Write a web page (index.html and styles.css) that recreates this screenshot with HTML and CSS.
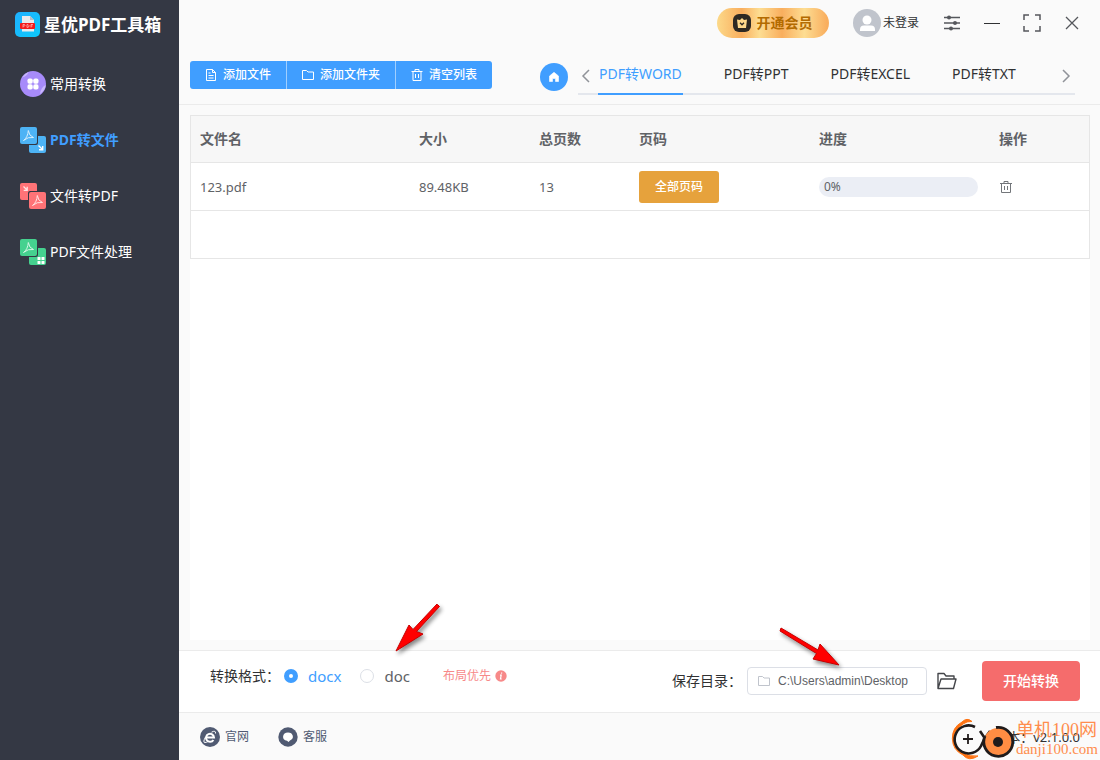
FILE: index.html
```html
<!DOCTYPE html>
<html lang="zh-CN">
<head>
<meta charset="utf-8">
<title>星优PDF工具箱</title>
<link rel="stylesheet" href="styles.css">
</head>
<body>
<div class="app">
  <aside class="sidebar">
    <h1 class="brand">
      <svg width="26" height="26" viewBox="0 0 26 26" aria-hidden="true">
        <defs><linearGradient id="brandBg" x1="0" y1="0" x2="1" y2="1"><stop offset="0" stop-color="#1fb0ff"/><stop offset="1" stop-color="#0cc9fb"/></linearGradient></defs>
        <rect x="0" y="0" width="25" height="25" rx="5" fill="url(#brandBg)"/>
        <path d="M7 4h8l4 4v11.500h-12z" fill="#e9eaec"/>
        <path d="M15 4l4 4h-4z" fill="#b9bcc2"/>
        <rect x="5" y="11" width="15" height="6" rx="1" fill="#f31c1c"/>
        <path d="M8 15.500v-3h1.500q1 .8 0 1.600h-1.500M12 12.500v3q2.500 0 2-2q-.5-1-2-1M16 15.500v-3h2M16 14h1.500" fill="none" stroke="#ffc9c9" stroke-width=".7"/>
      </svg>
      <span>星优PDF工具箱</span>
    </h1>
    <nav class="menu">
      <a class="menu-item" href="#common">
        <svg width="26" height="26" viewBox="0 0 26 26" aria-hidden="true">
          <circle cx="13" cy="13" r="13" fill="#a78bfa"/>
          <path d="M2 6.500A13 13 0 0 1 8.500.900Q7 5 2 6.500zM25.800 14Q21 16 20 23A13 13 0 0 0 25.800 14z" fill="#c9b8fc"/>
          <g fill="#fff"><rect x="7.500" y="7.500" width="5.200" height="5.200" rx="1.800"/><rect x="13.300" y="7.500" width="5.200" height="5.200" rx="1.800"/><rect x="7.500" y="13.300" width="5.200" height="5.200" rx="1.800"/><rect x="13.300" y="13.300" width="5.200" height="5.200" rx="1.800"/></g>
        </svg>
        <span>常用转换</span>
      </a>
      <a class="menu-item active" href="#pdf-to-file">
        <svg width="26" height="26" viewBox="0 0 26 26" aria-hidden="true">
          <rect x="9" y="9" width="17" height="17" rx="2" fill="#4db3f5"/>
          <rect x="-1" y="-1" width="19" height="19" rx="2" fill="#343844"/>
          <rect width="17" height="17" rx="2" fill="#4db3f5"/>
          <path d="M3.500 13.500Q8 10 8.300 3.500Q9 9 13.500 10.500Q8 9.500 3.500 13.500" fill="none" stroke="#d7effd" stroke-width="1"/>
          <path d="M18.500 18.500l4 4M22.700 19v3.700H19" fill="none" stroke="#fff" stroke-width="1.400"/>
        </svg>
        <span>PDF转文件</span>
      </a>
      <a class="menu-item" href="#file-to-pdf">
        <svg width="26" height="26" viewBox="0 0 26 26" aria-hidden="true">
          <rect width="17" height="17" rx="2" fill="#ff7377"/>
          <rect x="8" y="8" width="19" height="19" rx="2" fill="#343844"/>
          <rect x="9" y="9" width="17" height="17" rx="2" fill="#ff7377"/>
          <path d="M12.500 22.500Q17 19 17.300 12.500Q18 18 22.500 19.500Q17 18.500 12.500 22.500" fill="none" stroke="#ffe3e3" stroke-width="1"/>
          <path d="M3.500 3.500l3.500 3.500M7.200 3.800v3.500H3.700" fill="none" stroke="#ffe3e3" stroke-width="1.300"/>
        </svg>
        <span>文件转PDF</span>
      </a>
      <a class="menu-item" href="#pdf-process">
        <svg width="26" height="26" viewBox="0 0 26 26" aria-hidden="true">
          <rect x="9" y="9" width="17" height="17" rx="2" fill="#45d18f"/>
          <rect x="-1" y="-1" width="19" height="19" rx="2" fill="#343844"/>
          <rect width="17" height="17" rx="2" fill="#45d18f"/>
          <path d="M3.500 13.500Q8 10 8.300 3.500Q9 9 13.500 10.500Q8 9.500 3.500 13.500" fill="none" stroke="#d6f7e7" stroke-width="1"/>
          <g fill="#fff"><rect x="17.500" y="18" width="3" height="3" rx=".6"/><rect x="21.500" y="18" width="3" height="3" rx=".6"/><rect x="17.500" y="22" width="3" height="3" rx=".6"/><rect x="21.500" y="22" width="3" height="3" rx=".6"/></g>
        </svg>
        <span>PDF文件处理</span>
      </a>
    </nav>
  </aside>

  <main class="main">
    <header class="titlebar">
      <button class="vip" type="button">
        <svg width="18" height="18" viewBox="0 0 18 18" aria-hidden="true">
          <rect width="18" height="18" rx="6" fill="#2e2923"/>
          <path d="M4 5.500l3 .5L9 4l2 2 3-.500-1 8.500H5z" fill="#ffd98c"/>
          <path d="M7 8.800l2 2 2-2" fill="none" stroke="#2e2923" stroke-width="1.300"/>
        </svg>
        <span>开通会员</span>
      </button>
      <button class="account" type="button">
        <svg width="28" height="28" viewBox="0 0 28 28" aria-hidden="true">
          <circle cx="14" cy="14" r="14" fill="#c0c4cc"/>
          <circle cx="14" cy="11" r="4.500" fill="#fff"/>
          <path d="M7 22v-1.500a4 4 0 0 1 4-4h7a4 4 0 0 1 4 4V22z" fill="#fff"/>
        </svg>
        <span>未登录</span>
      </button>
      <div class="window-tools">
        <button class="tool" type="button" aria-label="设置">
          <svg width="18" height="18" viewBox="0 0 18 18" fill="none" stroke="#55575c" stroke-width="1.500"><path d="M1 3.500h16M1 9h16M1 14.500h16"/><g fill="#55575c" stroke="none"><circle cx="6" cy="3.500" r="2"/><circle cx="12" cy="9" r="2"/><circle cx="8" cy="14.500" r="2"/></g></svg>
        </button>
        <button class="tool" type="button" aria-label="最小化">
          <svg width="18" height="18" viewBox="0 0 18 18"><path d="M1 9.500h16" stroke="#303133" stroke-width="1"/></svg>
        </button>
        <button class="tool" type="button" aria-label="最大化">
          <svg width="18" height="18" viewBox="0 0 18 18" fill="none" stroke="#55575c" stroke-width="1.500"><path d="M1 6V1h5M12 1h5v5M17 12v5h-5M6 17H1v-5"/></svg>
        </button>
        <button class="tool" type="button" aria-label="关闭">
          <svg width="18" height="18" viewBox="0 0 18 18" fill="none" stroke="#55575c" stroke-width="1.300"><path d="M3 3l12 12M15 3L3 15"/></svg>
        </button>
      </div>
    </header>

    <div class="toolbar">
      <div class="actions">
        <button class="action" type="button">
          <svg width="12" height="12" viewBox="0 0 12 12" fill="none" stroke="#fff"><path d="M1.500.500h6l3 3v8h-9zM7.500.500v3h3M3.500 4h2M3.500 6.500h5M3.500 9h5"/></svg>
          <span>添加文件</span>
        </button>
        <button class="action" type="button">
          <svg width="12" height="12" viewBox="0 0 12 12" fill="none" stroke="#fff"><path d="M.500 1.500h4l1.500 1.500h5.500v7.500H.500z"/></svg>
          <span>添加文件夹</span>
        </button>
        <button class="action" type="button">
          <svg width="12" height="12" viewBox="0 0 12 12" fill="none" stroke="#fff"><path d="M.500 2.500h11M4 2.500v-2h4v2M2 2.500v9h8v-9M4.500 5v4M7.500 5v4"/></svg>
          <span>清空列表</span>
        </button>
      </div>
      <button class="home" type="button" aria-label="首页">
        <svg width="12" height="12" viewBox="0 0 12 12"><path d="M6 1.300L10.500 5v5.500H7.500V7.500h-3v3H1.500V5z" fill="#fff" stroke="#fff" stroke-width=".6" stroke-linejoin="round"/></svg>
      </button>
      <nav class="tabs">
        <button class="arrow" type="button" aria-label="上一页"><svg width="14" height="14" viewBox="0 0 14 14" fill="none" stroke="#909399" stroke-width="1.500"><path d="M10 1L4 7l6 6"/></svg></button>
        <div class="tab-list">
          <button class="tab active" type="button">PDF转WORD</button>
          <button class="tab" type="button">PDF转PPT</button>
          <button class="tab" type="button">PDF转EXCEL</button>
          <button class="tab" type="button">PDF转TXT</button>
        </div>
        <button class="arrow" type="button" aria-label="下一页"><svg width="14" height="14" viewBox="0 0 14 14" fill="none" stroke="#909399" stroke-width="1.500"><path d="M5 1l6 6-6 6"/></svg></button>
      </nav>
    </div>

    <section class="content">
      <div class="panel">
        <table class="files">
          <colgroup><col><col class="col-size"><col class="col-pages"><col class="col-range"><col class="col-range"><col class="col-tools"></colgroup>
          <thead><tr><th>文件名</th><th>大小</th><th>总页数</th><th>页码</th><th>进度</th><th>操作</th></tr></thead>
          <tbody>
            <tr>
              <td>123.pdf</td><td>89.48KB</td><td>13</td>
              <td><button class="range" type="button">全部页码</button></td>
              <td><div class="progress" role="progressbar" aria-valuenow="0" aria-label="进度">0%</div></td>
              <td><button class="delete" type="button" aria-label="删除"><svg width="14" height="14" viewBox="0 0 14 14" fill="none" stroke="#73767a"><path d="M1 3.500h12M5 3.500v-2h4v2M2.500 3.500v9h9v-9M5.500 6v4M8.500 6v4"/></svg></button></td>
            </tr>
            <tr><td colspan="6"></td></tr>
          </tbody>
        </table>
      </div>
    </section>

    <section class="options">
      <div class="format" role="radiogroup" aria-label="转换格式">
        <span class="caption">转换格式：</span>
        <label class="choice"><input type="radio" name="format" checked><span>docx</span></label>
        <label class="choice"><input type="radio" name="format"><span>doc</span></label>
        <span class="hint">布局优先
          <svg width="12" height="12" viewBox="0 0 12 12" aria-hidden="true"><circle cx="6" cy="6" r="5.700" fill="#f78989"/><path d="M6.700 2.500l-.2 1.200M5 5.200h1.200L5.500 9h1.200" fill="none" stroke="#fff" stroke-width="1.200"/></svg>
        </span>
      </div>
      <div class="save">
        <label class="caption" for="dir">保存目录：</label>
        <div class="path">
          <svg width="12" height="12" viewBox="0 0 12 12" fill="none" stroke="#c0c4cc" aria-hidden="true"><path d="M.500 1.500h4l1.500 1.500h5.500v7.500H.500z"/></svg>
          <input id="dir" type="text" value="C:\Users\admin\Desktop">
        </div>
        <button class="browse" type="button" aria-label="浏览">
          <svg width="20" height="18" viewBox="0 0 20 18" fill="none" stroke="#44464a" stroke-width="1.400" stroke-linejoin="round"><path d="M1 16.500v-15h6l2 2.500h8v3M1 16.500L4 7h15l-2.500 9.500z"/></svg>
        </button>
        <button class="start" type="button">开始转换</button>
      </div>
    </section>

    <footer class="footer">
      <a class="foot-link" href="#site">
        <svg width="20" height="20" viewBox="0 0 20 20" aria-hidden="true"><circle cx="10" cy="10" r="10" fill="#505a72"/><path d="M6.500 10.500h7.500A4 4 0 1 0 13.400 13" fill="none" stroke="#fff" stroke-width="2"/><path d="M11.500 5.200Q16 2.800 15.500 6.500M5.500 10Q2.500 15.500 5 15.500Q7 15.300 8 14.500" fill="none" stroke="#fff" stroke-width="1"/></svg>
        <span>官网</span>
      </a>
      <a class="foot-link" href="#service">
        <svg width="20" height="20" viewBox="0 0 20 20" aria-hidden="true"><circle cx="10" cy="10" r="9.700" fill="#505a72"/><path d="M10 5.500a5 4.200 0 0 1 2 8L10.500 15 9 13.800A5 4.200 0 0 1 10 5.500z" fill="#fff"/></svg>
        <span>客服</span>
      </a>
      <span class="version">版本：v2.1.0.0</span>
    </footer>
  </main>

  <svg class="pointer pointer-left" width="56" height="60" viewBox="0 0 56 60" aria-hidden="true"><path d="M45.500 6.500L47.500 8.500 24.500 33.500 31 36 4 53 17 27 21 31.500 45 6z" fill="#f00" stroke="#c60000" stroke-width="1"/></svg>
  <svg class="pointer pointer-right" width="70" height="50" viewBox="0 0 70 50" aria-hidden="true"><path d="M6 4L43 26 45 20 64 41 38 35 41.500 29.500 5 7z" fill="#f00" stroke="#c60000" stroke-width="1"/></svg>

  <div class="watermark">
    <svg width="66" height="42" viewBox="0 0 66 42" aria-hidden="true">
      <path d="M22 3.500Q17-1 12 4A18.500 18.500 0 0 0 13 37Q19 44 28 38Q20 39 14 35A17 17 0 0 1 13 6Q17 3 22 3.500z" fill="#ff7414" stroke="#ff7414" stroke-width="1"/>
      <circle cx="18" cy="21" r="14" fill="#fafafa"/>
      <path d="M25 9A14 14 0 1 0 31 28Q34 20 40 13M30 13l4 6" fill="none" stroke="#201b1b" stroke-width="2.600"/>
      <path d="M18 16v10M13 21h10" stroke="#201b1b" stroke-width="1.800"/>
      <circle cx="48" cy="24" r="14" fill="#ff8d43"/>
      <path d="M46 9.500A14.500 14.500 0 1 1 35 18" fill="none" stroke="#201b1b" stroke-width="2.800"/>
      <circle cx="48" cy="24" r="5" fill="#201b1b"/>
    </svg>
    <div class="watermark-text"><strong>单机100网</strong><span>danji100.com</span></div>
  </div>
</div>
</body>
</html>
```
FILE: styles.css
```css
* { box-sizing: border-box; }

body {
  margin: 0;
  font: 14px/20px "Noto Sans", "Noto Sans CJK SC", sans-serif;
  color: #303133;
  background: #fafafa;
}

button, input { margin: 0; padding: 0; border: 0; background: none; font: inherit; color: inherit; }
button { cursor: pointer; white-space: nowrap; }
a { color: inherit; text-decoration: none; }
svg { display: block; flex: none; }

.app { position: relative; display: flex; min-height: 100vh; overflow: hidden; }

.sidebar { flex: none; width: 179px; background: #343844; color: #fff; }
.brand { display: flex; align-items: center; gap: 3px; height: 46px; margin: 0 0 10px; padding: 3px 0 0 15px; font-size: 17px; font-weight: 700; white-space: nowrap; }
.menu-item { display: flex; align-items: center; gap: 4px; height: 56px; padding-left: 20px; }
.menu-item.active { color: #409eff; font-weight: 700; }

.main { flex: 1; min-width: 0; display: flex; flex-direction: column; }

.titlebar { display: flex; align-items: center; justify-content: flex-end; height: 46px; padding-right: 19px; }
.vip { display: flex; align-items: center; justify-content: center; gap: 5px; width: 112px; height: 30px; border-radius: 15px; color: #b36b00; font-weight: 700; background: linear-gradient(90deg, #fcd989, #f9ae5e 22%, #fddd92 38%, #f9ae5e 58%, #fddd92 78%, #f9ae5e 98%); }
.account { display: flex; align-items: center; gap: 2px; margin: 0 24px; font-size: 12px; }
.window-tools { display: flex; gap: 22px; }

.toolbar { display: flex; align-items: center; padding: 9px 25px 9px 11px; border-bottom: 1px solid #ebebeb; }
.actions { display: flex; margin-right: 48px; border-radius: 3px; background: #409eff; color: #fff; font-size: 12px; font-weight: 500; }
.action { display: flex; align-items: center; gap: 6px; height: 28px; padding: 0 15px; }
.action + .action { border-left: 1px solid #a0cfff; }
.home { display: flex; flex: none; align-items: center; justify-content: center; width: 28px; height: 28px; margin: 4px 10px 0 0; border-radius: 50%; background: #409eff; }
.tabs { flex: 1; display: flex; height: 40px; box-shadow: inset 0 -2px #e4e7ed; }
.tab-list { flex: 1; display: flex; gap: 40px; }
.arrow { display: flex; align-items: center; justify-content: center; width: 20px; padding-top: 2px; }
.arrow:first-child { padding-right: 4px; }
.tab { padding: 0 1px; font-size: 14px; border-bottom: 2px solid transparent; }
.tab.active { color: #409eff; border-color: #409eff; }

.content { flex: 1; display: flex; padding: 10px 10px 10px 11px; }
.panel { flex: 1; background: #fff; }
.files { width: 100%; table-layout: fixed; border-collapse: separate; border-spacing: 0; border: 1px solid #e6e6e6; border-bottom: 0; color: #606266; text-align: left; }
.files th, .files td { height: 48px; padding: 0 12px 0 9px; border-bottom: 1px solid #e6e6e6; }
.files th { height: 47px; background: #f7f7f7; font-size: 14px; font-weight: 700; }
.files td { font-size: 13px; }
.col-size { width: 120px; }
.col-pages { width: 100px; }
.col-range { width: 180px; }
.col-tools { width: 99px; }
.range { display: block; width: 80px; height: 32px; border-radius: 3px; background: #e6a23c; color: #fff; font-size: 12px; font-weight: 500; }
.progress { height: 20px; padding-left: 5px; border-radius: 10px; background: #ebeef5; font-size: 12px; }
.delete { display: block; }

.options { display: flex; justify-content: space-between; padding: 10px 20px 11px 31px; border-top: 1px solid #ebebeb; background: #fff; }
.format { display: flex; align-items: center; padding-bottom: 10px; }
.caption { white-space: nowrap; }
.choice { display: flex; align-items: center; gap: 10px; margin-left: 4px; color: #606266; font-size: 15px; }
.choice + .choice { margin-left: 19px; }
.choice input { appearance: none; width: 14px; height: 14px; border: 1px solid #dcdfe6; border-radius: 50%; background: #fff; }
.choice input:checked { border: 5px solid #409eff; }
.choice input:checked + span { color: #409eff; }
.hint { display: flex; align-items: center; gap: 4px; margin-left: 33px; color: #f78989; font-size: 12px; }
.save { display: flex; align-items: center; }
.path { display: flex; align-items: center; gap: 8px; width: 180px; height: 28px; margin: 0 10px 0 5px; padding: 0 10px; border: 1px solid #dcdfe6; border-radius: 4px; }
.path input { flex: 1; min-width: 0; color: #606266; font: 12px/20px "Liberation Sans", sans-serif; }
.start { width: 98px; height: 40px; margin-left: 25px; border-radius: 4px; background: #f56c6c; color: #fff; font-weight: 500; }

.footer { display: flex; align-items: center; gap: 29px; height: 48px; padding: 0 20px 0 21px; border-top: 1px solid #ebebeb; font-size: 12px; color: #505a72; }
.foot-link { display: flex; align-items: center; gap: 5px; }
.version { margin-left: auto; color: #303133; font-size: 13px; }

.pointer { position: absolute; pointer-events: none; filter: drop-shadow(2px 3px 2px #00000077); }
.pointer-left { right: 652px; bottom: 102px; }
.pointer-right { right: 255px; bottom: 86px; }

.watermark { position: absolute; right: 2px; bottom: 0; display: flex; align-items: center; pointer-events: none; color: #ff8d4d; }
.watermark-text { display: flex; flex-direction: column; }
.watermark-text strong { font: 400 18px/20px "Liberation Serif", "Noto Sans CJK SC", serif; }
.watermark-text span { font: 400 15px/18px "Liberation Serif", serif; }
```
